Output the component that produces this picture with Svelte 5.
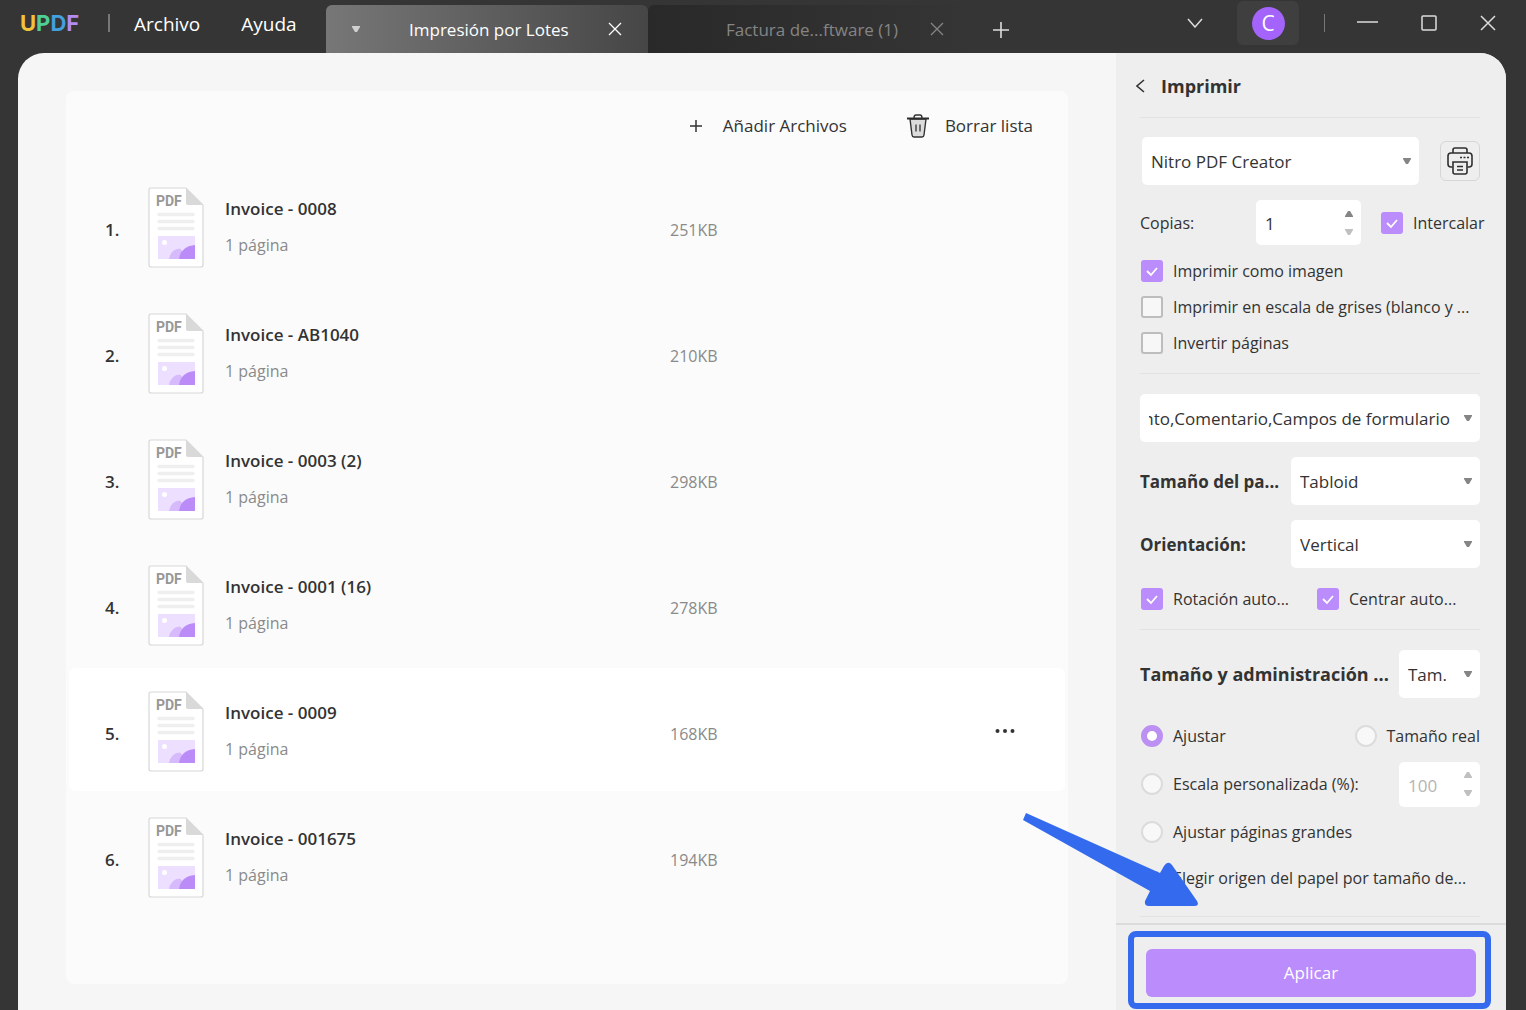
<script>
  const files = [
    { name: 'Invoice - 0008', size: '251KB' },
    { name: 'Invoice - AB1040', size: '210KB' },
    { name: 'Invoice - 0003 (2)', size: '298KB' },
    { name: 'Invoice - 0001 (16)', size: '278KB' },
    { name: 'Invoice - 0009', size: '168KB', active: true },
    { name: 'Invoice - 001675', size: '194KB' }
  ];
  let fit = $state('ajustar');
</script>

{#snippet cross()}
  <svg class="cross" viewBox="0 0 14 14" width="14" height="14" aria-hidden="true"><path d="M1 1l12 12M13 1L1 13" /></svg>
{/snippet}

{#snippet check(text, checked, cls = '')}
  <label class="option {cls}">
    <span class="tick">
      <input type="checkbox" {checked} />
      <svg viewBox="0 0 22 22" width="22" height="22" aria-hidden="true"><path d="M6 11l4 4 6-7" /></svg>
    </span>
    <span>{text}</span>
  </label>
{/snippet}

{#snippet radio(text, value)}
  <label class="option">
    <input type="radio" name="fit" {value} bind:group={fit} />
    <span>{text}</span>
  </label>
{/snippet}

{#snippet picker(label, text, cls)}
  <span class="picker {cls}">
    <select aria-label={label}><option>{text}</option></select>
    <svg viewBox="0 0 8 6" width="8" height="6" aria-hidden="true"><path d="M0 0h8v1L5 6H3L0 1z" /></svg>
  </span>
{/snippet}

{#snippet spinArrows()}
  <svg viewBox="0 0 8 24" width="8" height="24" aria-hidden="true">
    <path class="up" d="M0 6h8V5L5 0H3L0 5z" />
    <path class="down" d="M0 18h8v1l-3 5H3l-3-5z" />
  </svg>
{/snippet}

<div class="app">
  <header class="titlebar">
    <div class="logo"><span class="u">U</span><span class="p">P</span><span class="d">D</span><span class="f">F</span></div>
    <span class="rule first"></span>
    <nav class="menu">
      <button>Archivo</button>
      <button>Ayuda</button>
    </nav>
    <div class="tabs">
      <div class="tab current">
        <svg viewBox="0 0 8 6" width="8" height="6" aria-hidden="true"><path d="M0 0h8v1L5 6H3L0 1z" fill="#d0d0d0" /></svg>
        <span class="tab-name">Impresión por Lotes</span>
        <button aria-label="Cerrar pestaña">{@render cross()}</button>
      </div>
      <div class="tab">
        <span></span>
        <span class="tab-name">Factura de...ftware (1)</span>
        <button aria-label="Cerrar pestaña">{@render cross()}</button>
      </div>
    </div>
    <button class="add-tab" aria-label="Nueva pestaña">
      <svg viewBox="0 0 18 18" width="18" height="18"><path d="M9 1v16M1 9h16" /></svg>
    </button>
    <div class="window-controls">
      <button aria-label="Más pestañas"><svg viewBox="0 0 16 10" width="16" height="10"><path d="M1 1l7 8 7-8" /></svg></button>
      <button class="account" aria-label="Cuenta"><span>C</span></button>
      <span class="rule"></span>
      <button aria-label="Minimizar"><svg viewBox="0 0 22 16" width="22" height="16"><path d="M1 7h21" /></svg></button>
      <button aria-label="Maximizar"><svg viewBox="0 0 16 16" width="16" height="16"><rect x="1" y="1" width="14" height="14" rx="1" /></svg></button>
      <button aria-label="Cerrar"><svg viewBox="0 0 16 16" width="16" height="16"><path d="M1 1l14 14M15 1L1 15" /></svg></button>
    </div>
  </header>

  <div class="body">
    <main>
      <section class="card">
        <div class="toolbar">
          <button>
            <svg viewBox="0 0 12 12" width="12" height="12" aria-hidden="true"><path d="M6 0v12M0 6h12" stroke="#333" stroke-width="1.5" /></svg>
            Añadir Archivos
          </button>
          <button>
            <svg viewBox="0 0 22 24" width="22" height="24" aria-hidden="true">
              <path d="M3 5l2 16q.3 2 2 2h8q1.700 0 2-2l2-16z" fill="#dcdcdc" stroke="#333" stroke-width="1.400" />
              <path d="M7 4q0-3 2-3h4q2 0 2 3" fill="none" stroke="#333" stroke-width="1.400" />
              <path d="M0 4.500h22" stroke="#2c2c2c" stroke-width="2" />
              <path d="M9 10.500v7M13 10.500v7" stroke="#333" stroke-width="1.300" />
            </svg>
            Borrar lista
          </button>
        </div>
        <ol class="files">
          {#each files as file, i}
            <li class:active={file.active}>
              <span class="num">{i + 1}.</span>
              <svg class="pdf" viewBox="0 0 56 84" width="56" height="84" aria-hidden="true">
                <path d="M3 3h35l17 17v60q0 2-2 2H3q-2 0-2-2V5q0-2 2-2z" fill="#fff" stroke="#d8d8d8" stroke-width="1.200" />
                <path d="M38 3l17 17H40q-2 0-2-2z" fill="#d9d9d9" />
                <text x="8" y="21">PDF</text>
                <path d="M11 29.500h34M11 36.500h34M11 43.500h34" stroke="#efefef" stroke-width="3.500" stroke-linecap="round" />
                <path d="M10 51h37v23H10z" fill="#ecdfff" />
                <circle cx="16.500" cy="57.500" r="2.500" fill="#fff" />
                <path d="M21 74q2-10 11-10.500L41 74z" fill="#d6bafb" />
                <path d="M31 74q2-13 16-14v14z" fill="#bb8cf8" />
              </svg>
              <div class="meta">
                <span class="name">{file.name}</span>
                <span class="pages">1 página</span>
              </div>
              <span class="size">{file.size}</span>
              {#if file.active}
                <button class="more" aria-label="Más opciones">
                  <svg viewBox="0 0 20 4" width="20" height="4"><circle cx="2.500" cy="2" r="2" /><circle cx="10" cy="2" r="2" /><circle cx="17.500" cy="2" r="2" /></svg>
                </button>
              {/if}
            </li>
          {/each}
        </ol>
      </section>
    </main>

    <aside>
      <div class="settings">
        <div class="heading">
          <button aria-label="Volver"><svg viewBox="0 0 9 14" width="9" height="14"><path d="M8 1L1 7l7 6" fill="none" stroke="#333" stroke-width="1.600" /></svg></button>
          <h1>Imprimir</h1>
        </div>

        <div class="row printer">
          {@render picker('Impresora', 'Nitro PDF Creator', 'grow')}
          <button class="props" aria-label="Propiedades de la impresora">
            <svg viewBox="0 0 26 28" width="26" height="28" fill="none" stroke="#2f2f2f" stroke-width="1.600">
              <path d="M6 6V3q0-2 2-2h10q2 0 2 2v3" />
              <path d="M5.500 20H4q-3 0-3-3V9q0-3 3-3h18q3 0 3 3v8q0 3-3 3h-1.500" />
              <path d="M6 15h14v10q0 2-2 2H8q-2 0-2-2z" />
              <path d="M10 19.500h6M10 23h6" />
              <path d="M13 10.500h2M16.500 10.500h2M20 10.500h2" />
            </svg>
          </button>
        </div>

        <div class="row copies">
          <label class="copies-label" for="copies">Copias:</label>
          <span class="spinner"><input id="copies" type="number" value="1" min="1" />{@render spinArrows()}</span>
          {@render check('Intercalar', true)}
        </div>

        <div class="checks">
          {@render check('Imprimir como imagen', true)}
          {@render check('Imprimir en escala de grises (blanco y ...', false)}
          {@render check('Invertir páginas', false)}
        </div>

        <div class="group">
          {@render picker('Contenido', 'Documento,Comentario,Campos de formulario', 'tail')}
          <div class="row"><strong>Tamaño del pa...</strong>{@render picker('Tamaño del papel', 'Tabloid', 'medium')}</div>
          <div class="row"><strong>Orientación:</strong>{@render picker('Orientación', 'Vertical', 'medium')}</div>
          <div class="pair">
            {@render check('Rotación auto...', true)}
            {@render check('Centrar auto...', true)}
          </div>
        </div>

        <div class="group sizing">
          <div class="row"><h2>Tamaño y administración ...</h2>{@render picker('Administración de página', 'Tam.', 'small')}</div>
          <div class="row fits">
            {@render radio('Ajustar', 'ajustar')}
            {@render radio('Tamaño real', 'real')}
          </div>
          <div class="row scale">
            {@render radio('Escala personalizada (%):', 'escala')}
            <span class="spinner off"><input type="number" value="100" disabled aria-label="Escala" />{@render spinArrows()}</span>
          </div>
          {@render radio('Ajustar páginas grandes', 'grandes')}
          {@render check('Elegir origen del papel por tamaño de...', false, 'slim')}
        </div>
        <div class="end"></div>
      </div>

      <footer>
        <div class="highlight"><button>Aplicar</button></div>
        <svg class="pointer" viewBox="0 0 180 100" width="180" height="100" aria-hidden="true">
          <path d="M6 3L140 63l4-7q4-6 8-1l25 36q3 5-3 5h-45q-5 0-4-5l5-10L3 10z" fill="#346bee" />
        </svg>
      </footer>
    </aside>
  </div>
</div>

<style>
  :global(body) { background: #353535; }
  .app, .app * { box-sizing: border-box; }
  .app {
    display: flex; flex-direction: column; min-height: 100vh;
    background: #353535; color: #333;
    font-family: "Open Sans", "Noto Sans", sans-serif; font-size: 17px; line-height: 24px;
  }
  button { font: inherit; color: inherit; background: none; border: 0; padding: 0; cursor: pointer; }
  svg { display: block; flex: none; }
  h1, h2 { margin: 0; font-size: 18px; font-weight: 700; white-space: nowrap; }
  input, select { font: inherit; color: inherit; margin: 0; }

  .titlebar { display: flex; height: 53px; color: #fff; padding-right: 30px; }
  .logo { width: 87px; padding: 11px 0 0 20px; font-family: Inter, sans-serif; font-size: 22px; font-weight: 700; }
  .u { color: #f2c23a; } .p { color: #4fce95; } .d { color: #449fdd; } .f { color: #b48cf0; }
  .rule { width: 1px; height: 18px; background: #777; }
  .rule.first { width: 2px; margin: 14px 24px 0 21px; }
  .menu { display: flex; gap: 41px; width: 192px; height: 47px; font-size: 19px; }
  .tabs { display: flex; padding-top: 5px; }
  .tab {
    display: grid; grid-template-columns: 52px 1fr 14px; align-items: center;
    width: 322px; padding: 0 26px 0 26px; color: #858585; font-size: 17px;
    background: linear-gradient(90deg, #292929, #353535); border-radius: 6px 6px 0 0;
  }
  .tab.current { color: #fff; background: linear-gradient(90deg, #777, #464646); }
  .tab.current .tab-name { padding-left: 5px; }
  .tab-name { white-space: nowrap; padding-top: 2px; }
  .cross { fill: none; stroke: currentColor; stroke-width: 1.300; }
  .add-tab { margin: 7px 0 0 22px; stroke: #ddd; stroke-width: 1.600; }
  .window-controls { display: flex; align-items: center; height: 46px; margin-left: auto; }
  .window-controls svg { fill: none; stroke: #ddd; stroke-width: 1.500; }
  .account { width: 62px; height: 44px; margin: 0 25px 0 34px; background: #3f3f3f; border-radius: 6px; display: grid; place-items: center; }
  .account span { width: 33px; height: 33px; border-radius: 50%; background: #a463fb; font-size: 21px; line-height: 33px; }
  .window-controls .rule + button { margin-left: 31px; }
  .window-controls .rule ~ button + button { margin-left: 43px; }

  .body { flex: 1; display: flex; margin: 0 20px 0 18px; border-radius: 26px 26px 0 0; overflow: hidden; background: #f6f6f6; }
  main { flex: 1; display: flex; padding: 38px 48px 26px; }
  .card { flex: 1; background: #fbfbfb; border-radius: 8px; padding: 0 3px; }
  .toolbar { display: flex; justify-content: flex-end; gap: 60px; height: 73px; padding: 0 32px 4px 0; }
  .toolbar button { display: flex; align-items: center; gap: 16px; }
  .toolbar button:first-child { gap: 21px; }
  .files { list-style: none; margin: 0; padding: 0; display: grid; gap: 3px; }
  .files li {
    display: grid; grid-template-columns: 43px 77px 1fr 325px 20px; align-items: center;
    height: 123px; padding: 2px 50px 0 36px; border-radius: 6px;
  }
  .files li.active { background: #fff; }
  .num, .name { font-weight: 600; }
  .num, .size { padding-top: 6px; }
  .pdf text { font-family: Roboto, sans-serif; font-size: 14px; font-weight: 700; fill: #979797; }
  .meta { display: grid; gap: 12px; }
  .pages, .size { color: #8a8a8a; font-size: 16px; }
  .more { fill: #333; }

  aside { flex: 0 0 390px; min-width: 0; display: flex; flex-direction: column; background: #eee; }
  .settings { flex: 1; padding: 0 26px 0 24px; font-size: 16px; }
  .heading { display: flex; align-items: center; gap: 16px; height: 65px; padding-top: 2px; border-bottom: 1px solid #e2e2e2; margin-bottom: 19px; }
  .heading button { margin-left: -4px; }
  .row { display: flex; align-items: center; justify-content: space-between; }
  .picker { display: grid; align-items: center; font-size: 17px; }
  .picker select, .picker svg, .spinner input, .spinner svg, .tick input, .tick svg { grid-area: 1 / 1; }
  .picker select {
    appearance: none; width: 100%; height: 48px; border: 0; border-radius: 5px;
    background: #fff; padding: 2px 30px 0 9px;
  }
  .picker svg { justify-self: end; margin-right: 8px; fill: #858585; pointer-events: none; }
  .grow { flex: 1; }
  .medium { width: 189px; }
  .small { width: 81px; }
  .tail select { direction: rtl; }
  .printer { gap: 21px; padding-left: 2px; }
  .props { display: grid; place-items: center; width: 40px; height: 40px; border: 1px solid #d6d6d6; border-radius: 6px; }
  .copies { height: 45px; margin-top: 15px; justify-content: flex-start; }
  .copies-label { flex: none; width: 116px; }
  .spinner { flex: none; display: grid; align-items: center; width: 105px; margin-right: 19px; font-size: 17px; }
  .spinner input { appearance: textfield; width: 100%; height: 45px; border: 0; border-radius: 5px; background: #fff; padding: 2px 24px 0 9px; }
  .spinner input::-webkit-inner-spin-button { appearance: none; }
  .spinner svg { justify-self: end; margin-right: 8px; fill: #858585; pointer-events: none; }
  .spinner .down { fill: #c0c0c0; }
  .spinner.off { width: 81px; margin-right: 0; }
  .off input { color: #b5b5b5; }
  .off svg { fill: #c0c0c0; }
  .option { display: flex; align-items: center; gap: 10px; height: 36px; padding-left: 1px; white-space: nowrap; }
  .tick { display: grid; }
  .tick input { appearance: none; width: 22px; height: 22px; border: 2px solid #bdbdbd; border-radius: 3px; background: #f7f7f7; }
  .tick input:checked { background: #bb8cfc; border-color: #bb8cfc; }
  .tick svg { visibility: hidden; fill: none; stroke: #fff; stroke-width: 1.800; pointer-events: none; }
  .tick input:checked + svg { visibility: visible; }
  .slim .tick { place-items: center; }
  .slim .tick input { width: 14px; height: 14px; }
  input[type="radio"] { appearance: none; width: 22px; height: 22px; border: 2px solid #dcdcdc; border-radius: 50%; background: #f8f8f8; }
  input[type="radio"]:checked { border: 6px solid #bb90f2; background: #fff; }
  .checks { margin: 8px 0 12px; }
  .group { border-top: 1px solid #e2e2e2; padding: 20px 0 14px; display: grid; gap: 15px; }
  .group strong { font-size: 17px; padding-top: 2px; }
  .pair { display: grid; grid-template-columns: 176px 1fr; }
  .pair .option, .pair { height: 32px; }
  .sizing { gap: 10px; padding-bottom: 20px; }
  .fits { margin-top: 10px; }
  .scale { height: 40px; }
  .end { border-top: 1px solid #e2e2e2; }
  footer { position: relative; border-top: 2px solid #dbdbdb; padding: 6px 15px 1px 12px; }
  .highlight { border: 6px solid #346bee; border-radius: 8px; padding: 12px 9px 6px 12px; }
  .highlight button { width: 100%; height: 48px; border-radius: 6px; background: #bb8cfc; color: #fff; font-size: 17px; }
  .pointer { position: absolute; left: -96px; top: -115px; pointer-events: none; }
</style>
